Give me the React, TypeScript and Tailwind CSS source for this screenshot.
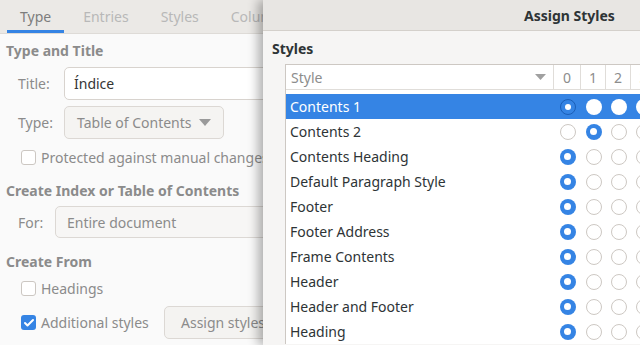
import { Check } from "lucide-react";

const rows: { name: string; level: number }[] = [
  { name: "Contents 1", level: 0 },
  { name: "Contents 2", level: 1 },
  { name: "Contents Heading", level: 0 },
  { name: "Default Paragraph Style", level: 0 },
  { name: "Footer", level: 0 },
  { name: "Footer Address", level: 0 },
  { name: "Frame Contents", level: 0 },
  { name: "Header", level: 0 },
  { name: "Header and Footer", level: 0 },
  { name: "Heading", level: 0 },
];

function Radio({ checked, selected }: { checked: boolean; selected: boolean }) {
  if (selected) {
    return checked ? (
      <span className="flex size-4 items-center justify-center rounded-full border border-[#1b5fb8] bg-[#3584e4]">
        <span className="size-[6px] rounded-full bg-white" />
      </span>
    ) : (
      <span className="size-4 rounded-full bg-white" />
    );
  }
  return checked ? (
    <span className="flex size-4 items-center justify-center rounded-full bg-[#3584e4]">
      <span className="size-[7px] rounded-full bg-white" />
    </span>
  ) : (
    <span className="size-4 rounded-full border border-[#cdc8c3] bg-white" />
  );
}

function CheckBox({ checked }: { checked?: boolean }) {
  return checked ? (
    <span className="flex size-[15px] items-center justify-center rounded-[3px] bg-[#3584e4]">
      <Check className="size-3 text-white" strokeWidth={4} />
    </span>
  ) : (
    <span className="size-[15px] rounded-[3px] border border-[#ccc7c2] bg-white" />
  );
}

function LeftWindow() {
  return (
    <div className="w-[263px] shrink-0 overflow-hidden bg-[#fafafa] text-[14px] text-[#8b8b8b]">
      <div className="w-[320px]">
        <div className="flex h-[34px] items-stretch border-b border-[#dedbd7] bg-[#ebe9e6] pl-1">
          <div className="relative flex items-center px-4 text-[#7d7d7d]">
            Type
            <span className="absolute bottom-0 left-[3px] right-[3px] h-[3px] bg-[#3584e4]" />
          </div>
          <div className="flex items-center px-4 text-[#b8b8b8]">Entries</div>
          <div className="flex items-center px-4 text-[#b8b8b8]">Styles</div>
          <div className="flex items-center px-4 text-[#b8b8b8]">Columns</div>
        </div>

        <div className="mt-[6px] flex h-5 items-center pl-[6px] font-bold">Type and Title</div>
        <div className="mt-[7px] flex h-[33px] items-center">
          <span className="w-[64px] pl-[18px]">Title:</span>
          <div className="flex h-full flex-1 items-center rounded-[5px] border border-[#d8d3ce] bg-white px-[9px] text-[#353535]">
            Índice
          </div>
        </div>
        <div className="mt-[6px] flex h-[33px] items-center">
          <span className="w-[64px] pl-[18px]">Type:</span>
          <div className="flex h-full w-[160px] items-center justify-between rounded-[5px] border border-[#dcd8d4] bg-[#f5f4f2] pl-[12px] pr-[12px]">
            Table of Contents
            <svg width="12" height="7" viewBox="0 0 12 7">
              <path d="M0 0h12L6 7z" fill="#9a9a9a" />
            </svg>
          </div>
        </div>
        <div className="mt-[8px] flex h-5 items-center gap-[5px] pl-[21px]">
          <CheckBox />
          <span>Protected against manual changes</span>
        </div>

        <div className="mt-[13px] flex h-5 items-center pl-[6px] font-bold">
          Create Index or Table of Contents
        </div>
        <div className="mt-[6px] flex h-[32px] items-center">
          <span className="w-[55px] pl-[18px]">For:</span>
          <div className="flex h-full flex-1 items-center rounded-[5px] border border-[#dcd8d4] bg-[#f7f6f5] px-[11px]">
            Entire document
          </div>
        </div>

        <div className="mt-[13px] flex h-5 items-center pl-[6px] font-bold">Create From</div>
        <div className="mt-[7px] flex h-5 items-center gap-[5px] pl-[21px]">
          <CheckBox />
          <span>Headings</span>
        </div>
        <div className="mt-[8px] flex h-[33px] items-center">
          <div className="flex w-[164px] items-center gap-[5px] pl-[21px]">
            <CheckBox checked />
            <span>Additional styles</span>
          </div>
          <div className="flex h-full flex-1 items-center rounded-[5px] border border-[#dcd8d4] bg-[#f4f3f1] px-[16px]">
            Assign styles
          </div>
        </div>
      </div>
    </div>
  );
}

function Dialog() {
  return (
    <div className="relative z-10 flex-1 bg-[#f6f5f4] text-[14px] text-[#2e3436] shadow-[-5px_0_10px_rgba(0,0,0,0.3)]">
      <div className="flex h-[31px] items-center border-b border-[#d4d0cb] bg-[#e8e6e3] pl-[261px] font-bold">
        Assign Styles
      </div>
      <div className="mt-[7px] flex h-5 items-center pl-[9px] font-bold">Styles</div>
      <div className="ml-[22px] mt-[6px] border-l border-t border-[#cdc8c3] bg-white">
        <div className="grid h-[25px] grid-cols-[268px_27px_25px_25px_25px] border-b border-[#e0ddd9] text-[#8d8d8d]">
          <div className="flex items-center justify-between border-r border-[#e0ddd9] pl-[5px] pr-[7px]">
            Style
            <svg width="11" height="6" viewBox="0 0 11 6">
              <path d="M0 0h11L5.5 6z" fill="#a0a0a0" />
            </svg>
          </div>
          <div className="flex items-center justify-center border-r border-[#e0ddd9]">0</div>
          <div className="flex items-center justify-center border-r border-[#e0ddd9]">1</div>
          <div className="flex items-center justify-center border-r border-[#e0ddd9]">2</div>
          <div className="flex items-center justify-center">3</div>
        </div>
        <div className="h-[4px]" />
        {rows.map((r, i) => {
          const selected = i === 0;
          return (
            <div
              key={r.name}
              className={
                selected
                  ? "grid h-[25px] grid-cols-[268px_27px_25px_25px_25px] bg-[#3584e4] text-white"
                  : "grid h-[25px] grid-cols-[268px_27px_25px_25px_25px]"
              }
            >
              <div className="flex items-center pl-[4px]">{r.name}</div>
              {[0, 1, 2, 3].map((lv) => (
                <div key={lv} className="flex items-center justify-center">
                  <Radio checked={r.level === lv} selected={selected} />
                </div>
              ))}
            </div>
          );
        })}
      </div>
    </div>
  );
}

export default function App() {
  return (
    <div
      className="flex h-[345px] w-[640px] overflow-hidden"
      style={{ fontFamily: '"Noto Sans", sans-serif' }}
    >
      <LeftWindow />
      <Dialog />
    </div>
  );
}
